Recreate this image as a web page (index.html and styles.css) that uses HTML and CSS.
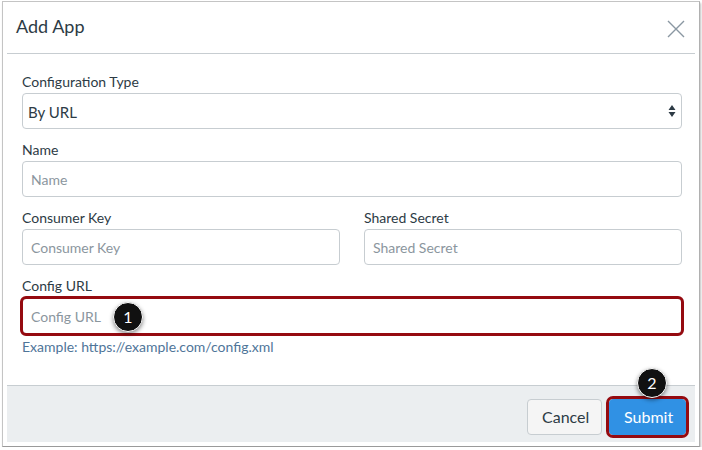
FILE: index.html
```html
<!DOCTYPE html>
<html>
<head>
<meta charset="utf-8">
<link rel="stylesheet" href="styles.css">
</head>
<body>
<div class="frame">
  <div class="header">
    <h1 class="title">Add App</h1>
    <svg class="close" width="18" height="18" viewBox="0 0 18 18"><path d="M1 1 L17 17 M17 1 L1 17" stroke="#8a97a2" stroke-width="1.4" fill="none"/></svg>
  </div>
  <div class="body">
    <div class="field">
      <div class="label">Configuration Type</div>
      <div class="select">
        <span>By URL</span>
        <svg class="arrows" width="8" height="14" viewBox="0 0 8 14"><path d="M4 1 L7.5 6 L0.5 6 Z M0.5 8 L7.5 8 L4 13 Z" fill="#2d3b45"/></svg>
      </div>
    </div>
    <div class="field">
      <div class="label">Name</div>
      <div class="input">Name</div>
    </div>
    <div class="field row">
      <div class="col">
        <div class="label">Consumer Key</div>
        <div class="input">Consumer Key</div>
      </div>
      <div class="col">
        <div class="label">Shared Secret</div>
        <div class="input">Shared Secret</div>
      </div>
    </div>
    <div class="field last">
      <div class="label">Config URL</div>
      <div class="input highlight">Config URL<span class="badge badge1">1</span></div>
      <div class="hint">Example: https://example.com/config.xml</div>
    </div>
  </div>
  <div class="footer">
    <button class="btn cancel">Cancel</button>
    <button class="btn submit">Submit<span class="badge badge2">2</span></button>
  </div>
</div>
</body>
</html>
```

FILE: styles.css
```css
* { box-sizing: border-box; }
html, body { margin: 0; padding: 0; background: #fff; }
body {
  font-family: Lato, "Noto Sans", sans-serif;
  color: #2d3b45;
  padding: 1px 0 0 2px;
}
.frame {
  width: 698px;
  height: 446px;
  border: 1px solid #c4c4c4;
  border-right-color: #b0b0b0;
  border-bottom-color: #9a9a9a;
  box-shadow: 1px 2px 2px rgba(0,0,0,0.25);
  padding: 4px;
  display: flex;
  flex-direction: column;
  background: #fff;
}
.header {
  height: 48px;
  border-bottom: 1px solid #c7cdd1;
  display: flex;
  justify-content: space-between;
  align-items: flex-start;
  padding: 8px 10px 0 9px;
}
.title {
  margin: 0;
  font-size: 18px;
  font-weight: 400;
  line-height: 24px;
}
.close { margin-top: 6px; }
.body {
  flex: 1;
  padding: 18px 13px 0 15px;
}
.field { margin-bottom: 11px; }
.field.last { margin-top: 1px; }
.label {
  font-size: 14px;
  line-height: 20px;
  margin-bottom: 1px;
}
.last .label { margin-bottom: 2px; }
.select, .input {
  height: 36px;
  border: 1px solid #c7cdd1;
  border-radius: 4px;
  font-size: 14px;
  display: flex;
  align-items: center;
  background: #fff;
}
.select {
  justify-content: space-between;
  padding: 0 5px 0 5px;
  font-size: 15px;
}
.select span { padding-top: 1px; }
.input {
  color: #8b969e;
  padding: 1px 8px 0 8px;
  position: relative;
}
.row {
  display: flex;
  gap: 24px;
}
.col { flex: 1; }
.highlight {
  outline: 3.5px solid #950a10;
  outline-offset: -1px;
  border-radius: 4px;
}
.hint {
  font-size: 14px;
  line-height: 18px;
  color: #4f7599;
  margin-top: 4px;
}
.badge {
  position: absolute;
  width: 30px;
  height: 30px;
  border-radius: 50%;
  background: #111;
  border: 1.5px solid #fff;
  box-shadow: 0 2px 4px rgba(0,0,0,0.45);
  color: #fff;
  font-family: Lato, sans-serif;
  font-size: 16px;
  font-weight: 400;
  display: flex;
  align-items: center;
  justify-content: center;
  line-height: 1;
}
.badge1 { left: 90px; top: 3px; }
.badge2 { left: 27px; top: -32px; }
.footer {
  height: 57px;
  border-top: 1px solid #c7cdd1;
  background: #ebeef0;
  display: flex;
  justify-content: flex-end;
  align-items: flex-start;
  padding: 13px 9px 0 0;
  gap: 7px;
}
.btn {
  font-family: Lato, sans-serif;
  font-size: 16px;
  line-height: 20px;
  height: 36px;
  border-radius: 4px;
  padding: 0 14px;
  border: 1px solid #c7cdd1;
  cursor: pointer;
}
.cancel {
  background: #f5f5f5;
  color: #2d3b45;
  width: 75px;
}
.submit {
  background: #3091e4;
  border-color: #3091e4;
  color: #fff;
  width: 77px;
  position: relative;
  outline: 3.5px solid #950a10;
  outline-offset: 0px;
}
```
